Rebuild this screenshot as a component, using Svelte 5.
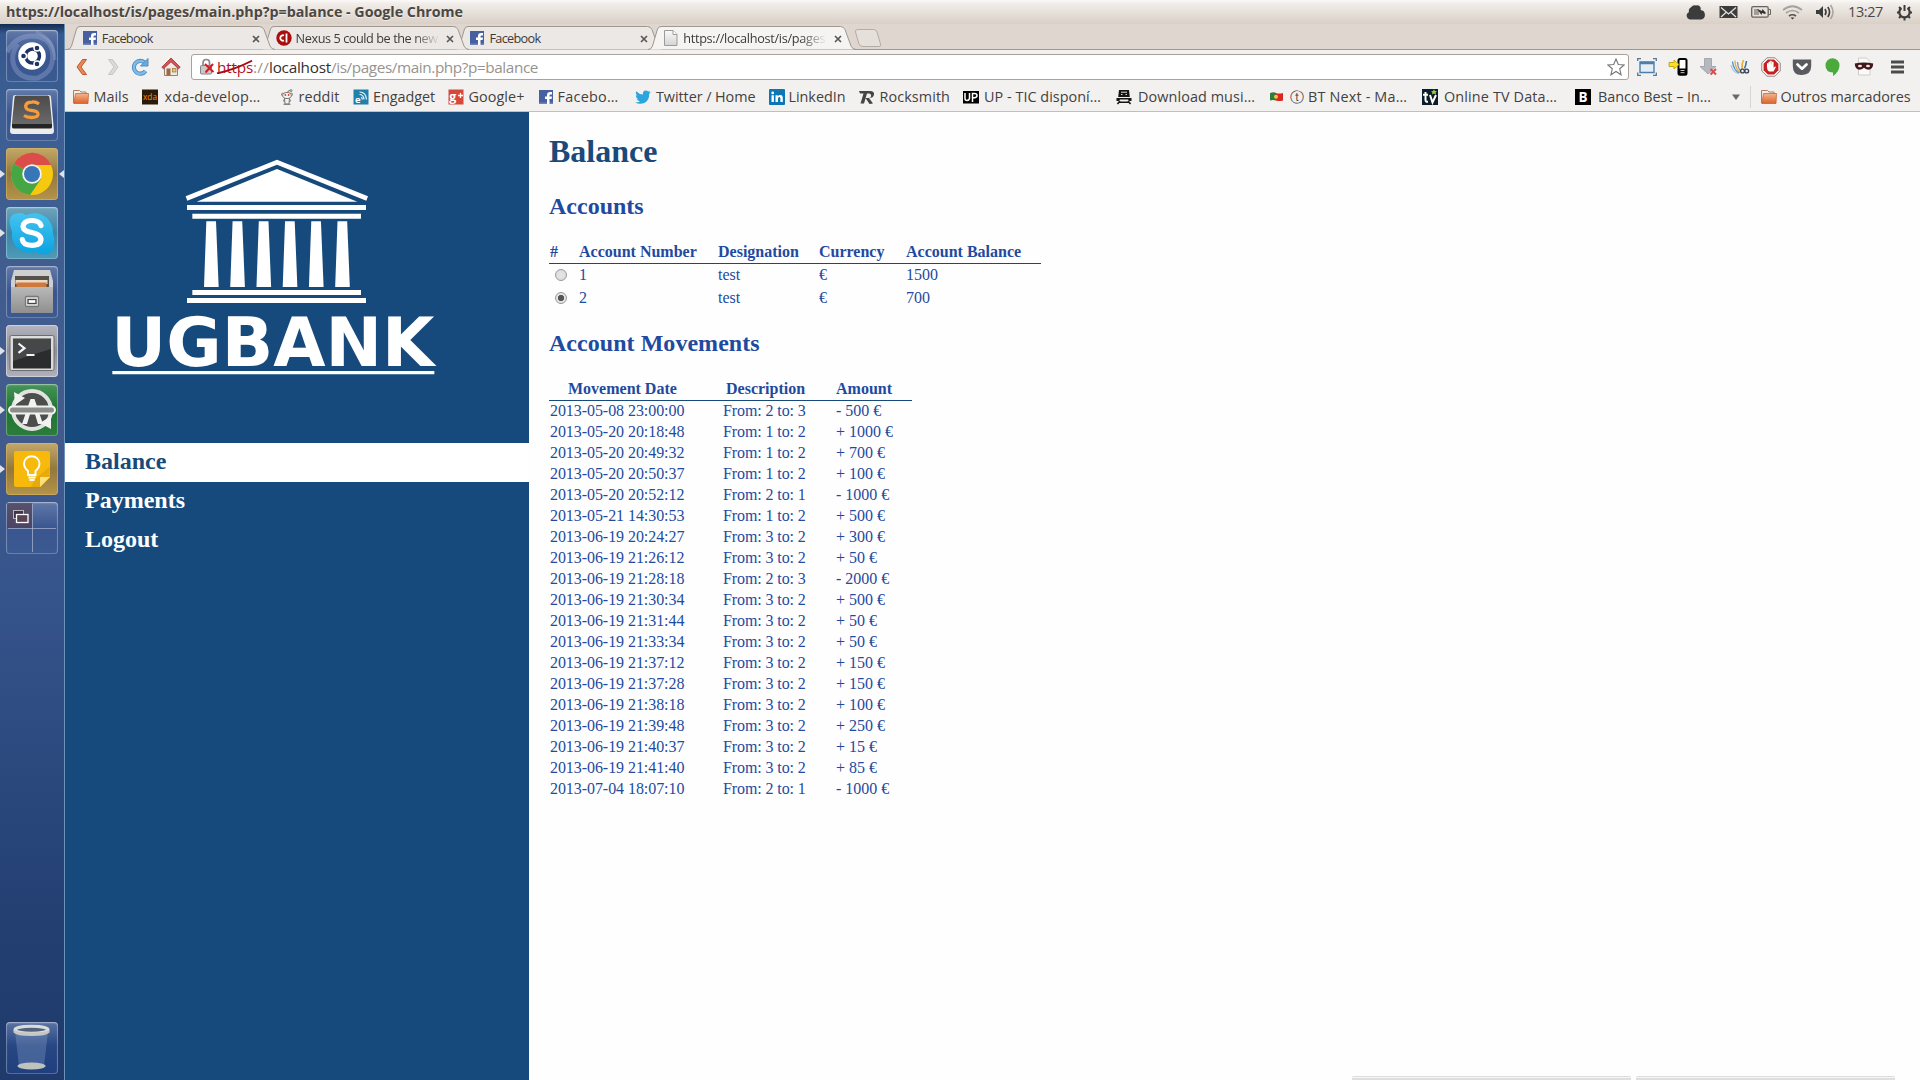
<script>
  // Spreads or tightens the letters so that a label fills its slot exactly.
  function fit(node, width) {
    const natural = node.getBoundingClientRect().width;
    const count = node.textContent.length;
    if (width && count) node.style.letterSpacing = (width - natural) / count + 'px';
  }

  const tray = [
    { icon: 'cloud', gap: 0 },
    { icon: 'mail', gap: 14 },
    { icon: 'battery', gap: 13 },
    { icon: 'wifi', gap: 11 },
    { icon: 'volume', gap: 12 },
  ];

  const tabs = [
    { icon: 'facebook', title: 'Facebook', w: 51 },
    { icon: 'cnet', title: 'Nexus 5 could be the new', w: 142 },
    { icon: 'facebook', title: 'Facebook', w: 51 },
    { icon: 'file', title: 'https://localhost/is/pages', w: 142, active: true },
  ];

  // gap: space before the favicon, pad: space between favicon and label, w: label width
  const bookmarks = [
    { icon: 'folder', label: 'Mails', gap: 0, pad: 4.5, w: 35 },
    { icon: 'xda', label: 'xda-develop…', gap: 13, pad: 7, w: 96 },
    { icon: 'reddit', label: 'reddit', gap: 18, pad: 4, w: 41 },
    { icon: 'engadget', label: 'Engadget', gap: 13, pad: 4.5, w: 62 },
    { icon: 'gplus', label: 'Google+', gap: 13, pad: 4.5, w: 56 },
    { icon: 'facebook', label: 'Facebo…', gap: 13, pad: 4, w: 61 },
    { icon: 'twitter', label: 'Twitter / Home', gap: 16, pad: 5.5, w: 99.5 },
    { icon: 'linkedin', label: 'LinkedIn', gap: 13, pad: 4, w: 57 },
    { icon: 'rocksmith', label: 'Rocksmith', gap: 13, pad: 5, w: 70.5 },
    { icon: 'up', label: 'UP - TIC disponí…', gap: 13, pad: 5, w: 117 },
    { icon: 'train', label: 'Download musi…', gap: 15, pad: 6, w: 117 },
    { icon: 'flag', label: 'ⓣ BT Next - Ma…', gap: 15, pad: 4, w: 117 },
    { icon: 'tv', label: 'Online TV Data…', gap: 14.5, pad: 6.5, w: 113 },
    { icon: 'best', label: 'Banco Best – In…', gap: 17.5, pad: 7.5, w: 113 },
  ];

  const extensions = ['window', 'phone', 'down', 'wings', 'abp', 'pocket', 'pin', 'mask', 'menu'];

  const launcher = [
    { icon: 'dash', tone: 'blue' },
    { icon: 'sublime', tone: 'blue' },
    { icon: 'chrome', tone: 'gold', running: true, focused: true },
    { icon: 'skype', tone: 'teal', running: true },
    { icon: 'files', tone: 'blue' },
    { icon: 'terminal', tone: 'silver', running: true },
    { icon: 'updater', tone: 'green', running: true },
    { icon: 'keep', tone: 'gold', running: true },
    { icon: 'workspaces', tone: 'blue' },
  ];

  const menu = ['Balance', 'Payments', 'Logout'];

  let selected = $state('2');
  const accounts = [
    ['1', 'test', '€', '1500'],
    ['2', 'test', '€', '700'],
  ];

  const movements = [
    ['2013-05-08 23:00:00', 'From: 2 to: 3', '- 500 €'],
    ['2013-05-20 20:18:48', 'From: 1 to: 2', '+ 1000 €'],
    ['2013-05-20 20:49:32', 'From: 1 to: 2', '+ 700 €'],
    ['2013-05-20 20:50:37', 'From: 1 to: 2', '+ 100 €'],
    ['2013-05-20 20:52:12', 'From: 2 to: 1', '- 1000 €'],
    ['2013-05-21 14:30:53', 'From: 1 to: 2', '+ 500 €'],
    ['2013-06-19 20:24:27', 'From: 3 to: 2', '+ 300 €'],
    ['2013-06-19 21:26:12', 'From: 3 to: 2', '+ 50 €'],
    ['2013-06-19 21:28:18', 'From: 2 to: 3', '- 2000 €'],
    ['2013-06-19 21:30:34', 'From: 3 to: 2', '+ 500 €'],
    ['2013-06-19 21:31:44', 'From: 3 to: 2', '+ 50 €'],
    ['2013-06-19 21:33:34', 'From: 3 to: 2', '+ 50 €'],
    ['2013-06-19 21:37:12', 'From: 3 to: 2', '+ 150 €'],
    ['2013-06-19 21:37:28', 'From: 3 to: 2', '+ 150 €'],
    ['2013-06-19 21:38:18', 'From: 3 to: 2', '+ 100 €'],
    ['2013-06-19 21:39:48', 'From: 3 to: 2', '+ 250 €'],
    ['2013-06-19 21:40:37', 'From: 3 to: 2', '+ 15 €'],
    ['2013-06-19 21:41:40', 'From: 3 to: 2', '+ 85 €'],
    ['2013-07-04 18:07:10', 'From: 2 to: 1', '- 1000 €'],
  ];
</script>

{#snippet trayIcon(name)}
  {#if name === 'cloud'}
    <svg width="19" height="16" viewBox="0 0 19 16"><path d="M4 15.500a4 4 0 0 1-1-7.600A4 4 0 0 1 5 3.200A5 5 0 0 1 10 1.500a3.500 3.500 0 0 1 4.500 4.500A4.800 4.800 0 0 1 15 15.500z" fill="#3c3c3c" /></svg>
  {:else if name === 'mail'}
    <svg width="19" height="16" viewBox="0 0 19 16"><rect x=".5" y="2" width="18" height="12" fill="#3c3c3c" /><path d="M2 3.500l7.500 6.500 7.500-6.500M2 13l5.500-5M17 13l-5.500-5" fill="none" stroke="#e9e4de" stroke-width="1.200" /></svg>
  {:else if name === 'battery'}
    <svg width="20" height="16" viewBox="0 0 20 16"><rect x=".7" y="2.700" width="16.500" height="10.500" rx="1.500" fill="#e6e1db" stroke="#66625d" stroke-width="1.300" /><rect x="3" y="5" width="5" height="6" fill="#a19d98" /><path d="M18 5.500h1.500v5H18" fill="none" stroke="#66625d" /><path d="M6 5l5 2 .500-2L15 9l-1 1-3-1-.500 2z" fill="#333" /></svg>
  {:else if name === 'wifi'}
    <svg width="21" height="16" viewBox="0 0 21 16" fill="none" stroke-width="1.700"><path d="M1 6q9.500-7.500 19 0M4 9q6.500-5 13 0" stroke="#a7a29b" /><path d="M7 12q3.500-2.500 7 0" stroke="#55514d" /><path d="M8.500 13.500h4l-2 2z" fill="#3c3c3c" /></svg>
  {:else if name === 'volume'}
    <svg width="21" height="16" viewBox="0 0 21 16"><path d="M1 6h3l4-4v12l-4-4H1z" fill="#3c3c3c" /><g fill="none" stroke-width="1.600"><path d="M10 5q2 3 0 6M12.800 3q3.500 5 0 10" stroke="#3c3c3c" /><path d="M15.500 1q5 7 0 14" stroke="#aaa59e" /></g></svg>
  {:else}
    <svg width="17" height="17" viewBox="0 0 17 17" fill="none" stroke="#3c3c3c"><path d="M5.500 4a5.200 5.200 0 1 0 6 0" stroke-width="2.200" /><path d="M8.500 1v6" stroke-width="2" /><path d="M1 8.500h2M14 8.500h2M3 14l1.500-1.500M14 14l-1.500-1.500M8.500 14v2.500M3 3l1.500 1.500M14 3l-1.500 1.500" stroke-width="2" /></svg>
  {/if}
{/snippet}

{#snippet favicon(name)}
  <svg class="favicon" width="16" height="16" viewBox="0 0 16 16">
    {#if name === 'facebook'}
      <rect x="1" y="1" width="14" height="14" fill="#4760a0" /><rect x="1" y="13.500" width="14" height="1.500" fill="#6d84b8" /><path d="M9 15V10H7V7.500h2V6q0-3 3-3h2v2.500h-1.500q-1 0-1 1v1H14L13.600 10h-2.100v5z" fill="#fff" />
    {:else if name === 'cnet'}
      <circle cx="8" cy="8" r="7.700" fill="#a90d0d" /><path d="M8 5.500a2.700 2.700 0 1 0 0 5M10.500 3.500v9" fill="none" stroke="#fff" stroke-width="1.800" />
    {:else if name === 'file'}
      <path d="M1.500 .5h8.500l4 4v11H1.500z" fill="url(#paper)" stroke="#9b9b9b" /><path d="M10 .5v4h4" fill="#fff" stroke="#9b9b9b" />
    {:else if name === 'folder'}
      <path d="M.5 14V1.500h6L8 3h5v3" fill="#f5efea" stroke="#b17b5e" /><path d="M2.500 4.500h13l-.5 10H.8z" fill="url(#folderFill)" stroke="#c2592b" stroke-width=".7" />
    {:else if name === 'xda'}
      <rect x="0" y=".5" width="16" height="15" fill="#2b1a06" /><text x="1" y="11.200" font-size="8.500" textLength="14" lengthAdjust="spacingAndGlyphs" fill="#f58a1f">xda</text>
    {:else if name === 'reddit'}
      <g fill="#f4f3f1" stroke="#777" stroke-width="1"><path d="M8.500 4q0-3 3-2.500" fill="none" /><circle cx="12" cy="1.600" r="1" /><path d="M5.500 9h5l-.5 6h-4z" /><circle cx="3.800" cy="5.500" r="1.300" /><circle cx="12.200" cy="5.500" r="1.300" /><ellipse cx="8" cy="6.500" rx="4.300" ry="3" /><path d="M5.500 10q-2 2 0 3M10.500 10q2 2 0 3M4.500 15.300h7" fill="none" /></g><circle cx="6.400" cy="6" r=".9" fill="#e0441c" /><circle cx="9.600" cy="6" r=".9" fill="#e0441c" />
    {:else if name === 'engadget'}
      <rect x=".5" y=".5" width="15" height="15" fill="#1f80ab" /><text x="2" y="14" font-size="9.500" font-weight="700" fill="#fff">e</text><path d="M6.500 5.500q4 0 4.500 5M6.500 3q6.500 0 7 7.500M8.500 8l1 2.500" fill="none" stroke="#e5f4fa" stroke-width="1.200" />
    {:else if name === 'gplus'}
      <rect x=".5" y=".5" width="15" height="15" fill="#d6483a" /><text x="1.300" y="11.500" font-size="12.500" font-weight="700" fill="#fff">g</text><path d="M10 6.500h5M12.500 4v5" stroke="#fff" stroke-width="1.300" />
    {:else if name === 'twitter'}
      <path d="M0 13.500q3 .2 5-1.300-2.500-.3-3.200-2.300h1.500Q.8 9 .8 6.200l1.500.4Q0 4.600 1.300 2.200 4 5.300 8 5.600 7.300 1.800 10.800 1.500q1.400 0 2.400 1l2-.8-1.300 1.900 1.900-.5-1.600 1.800Q14.300 11 9.800 13.700 5 16 0 13.500z" fill="#2ca5df" />
    {:else if name === 'linkedin'}
      <rect x="0" y="0" width="16" height="16" rx="1" fill="#0d77b5" /><path d="M2.500 6.200h2.400V13H2.500zM6.500 6.200h2.300v1Q10 5.800 11.500 6q2.300.2 2.300 3V13h-2.400V9.500q0-1.500-1.200-1.500T9 9.500V13H6.500z" fill="#fff" /><circle cx="3.700" cy="3.900" r="1.400" fill="#fff" />
    {:else if name === 'rocksmith'}
      <path d="M0 2h11q4.500 0 4 3.500T10 9l4 5.500-3.500.5-4-6h3q2.500 0 2.700-2T10.500 4.500H8L5 14.500H1.500L4.500 4.500H1z" fill="#454545" />
    {:else if name === 'up'}
      <rect x="0" y="2" width="16" height="12.500" fill="#000" /><path d="M2 4v5.500q0 2 2 2t2.500-2V4M9.500 13V4.500h2q2.500 0 2.500 2t-2.500 2.200H9.500" fill="none" stroke="#fff" stroke-width="1.500" />
    {:else if name === 'train'}
      <path d="M3 1h10l.8 7H2.200zM.5 9h15v3h-2.500l-1-1.500H4L3 12H.5z" fill="#151515" /><path d="M5 3.200h6M5 5.500h1.500M9.500 5.500H11" stroke="#ddd" /><path d="M1.500 15l2.500-3M14.500 15L12 12M3.500 13.300h9" stroke="#151515" stroke-width="1.600" />
    {:else if name === 'flag'}
      <path d="M0 4q4-1.500 6 0v7.500q-3-1-6 0z" fill="#2f7d3b" /><path d="M6 4q3 1 7 0v7.500q-4 1-7 0z" fill="#d92822" /><circle cx="6" cy="7.700" r="2" fill="#e8c93b" />
    {:else if name === 'tv'}
      <rect x="0" y="0" width="16" height="16" fill="#0b1d2a" /><path d="M3.500 3v8q0 2 2.500 1.800M1 5.800h5M8 6l2.500 7.500L14 6" fill="none" stroke="#fff" stroke-width="2" /><path d="M12 .2l1 1.800 2 .2-1.400 1.300.4 2-2-1-2 1 .4-2L9 2.200l2-.2z" fill="#9ad23c" />
    {:else if name === 'best'}
      <rect x="0" y="0" width="16" height="16" fill="#000" /><text x="3.500" y="13" font-size="13.500" font-weight="700" fill="#fff">B</text>
    {/if}
  </svg>
{/snippet}

{#snippet tool(name)}
  <svg width="20" height="20" viewBox="0 0 20 20">
    {#if name === 'back'}
      <path d="M10.500 2.500h4L9 10l5.500 7.500h-4L5 10z" fill="#ee8650" stroke="#b9582d" />
    {:else if name === 'forward'}
      <path d="M9.500 2.500h-4L11 10l-5.500 7.500h4L15 10z" fill="#dcd9d6" stroke="#c8c4c0" />
    {:else if name === 'reload'}
      <path d="M15.500 14a6.400 6.400 0 1 1-1-8.500" fill="none" stroke="#4c8cc4" stroke-width="4.200" /><path d="M15.500 14a6.400 6.400 0 1 1-1-8.500" fill="none" stroke="#82bae6" stroke-width="2.500" /><path d="M18 1.500V9h-7.500z" fill="#6caadb" stroke="#4c8cc4" />
    {:else if name === 'home'}
      <path d="M3.500 10v8.500h13V10L10 4z" fill="#eee9e2" stroke="#8b857e" /><path d="M10 1L.8 10.200l1.700 1.600L10 4.800l7.500 7 1.700-1.600z" fill="#d55356" stroke="#9e2f33" stroke-width=".8" /><rect x="5.500" y="11.500" width="4" height="7" fill="#a3673d" /><rect x="11.500" y="11.500" width="3.500" height="3.500" fill="#e8c75f" stroke="#7d6c42" stroke-width=".6" />
    {:else if name === 'window'}
      <path d="M3 5h14v10.500H3z" fill="#e5eef5" stroke="#4c80ab" stroke-width="1.400" /><path d="M3 6h14" stroke="#4c80ab" stroke-width="2.500" /><path d="M.7 4V1.700H4M19.300 4V1.700H16M.7 15.500v2.800H4M19.300 15.500v2.800H16" fill="none" stroke="#57779a" stroke-width="1.300" />
    {:else if name === 'phone'}
      <rect x="10.500" y="2" width="8" height="15.800" rx="1.500" fill="#fff" stroke="#000" stroke-width="2" /><path d="M10 11.500h9v6.500h-9z" fill="#000" /><path d="M12.500 13.500h4M12.500 15.700h4" stroke="#fff" stroke-width=".8" /><path d="M1 5.500h5V3l5 4.500-5 4.500V9.500H1z" fill="#ffe11a" stroke="#b39a08" stroke-width=".8" />
    {:else if name === 'down'}
      <path d="M5.500 1.500h7v8H17L9 17 1 9.500h4.500z" fill="#b5b9bf" stroke="#999ca2" stroke-width=".8" /><path d="M11.500 12l5.500 5.500M17 12l-5.500 5.500" stroke="#dd4b4b" stroke-width="2" />
    {:else if name === 'wings'}
      <g fill="none"><g stroke-width="1.300"><path d="M1 8q1 7 8 8.500" stroke="#a7c7df" /><path d="M2.500 4.500q1 9 7 11.500" stroke="#4a90d0" /><path d="M5 3.500q0 8 5 12" stroke="#e0b03b" /><path d="M7.500 5q0 5 3 9" stroke="#7d8fb0" /></g><path d="M13.500 3q-2 4-1.500 9" stroke="#e8ae2f" stroke-width="1.600" /><path d="M16.500 4q-.5 4-2 7.500" stroke="#3477b3" stroke-width="1.600" /><g stroke="#3a4657" stroke-width="1.400"><circle cx="12.500" cy="14" r="1.900" /><circle cx="16.700" cy="14" r="1.900" /></g></g>
    {:else if name === 'abp'}
      <path d="M6 .8h8L19.200 6v8L14 19.200H6L.8 14V6z" fill="#fff" stroke="#8a8584" /><path d="M6.800 2.600h6.400l4.200 4.200v6.400l-4.200 4.200H6.800l-4.200-4.200V6.800z" fill="#c9201f" /><path d="M6 10V6.500q.7-1 1.400 0V8.500l.1-3.500q.8-1 1.500 0v3l.2-4q.8-1 1.500 0l.1 4 .3-3q.8-1 1.500 0v6l1.200-1.500q1.300-.2.900 1l-2.200 4H8q-2-1-2-4.500z" fill="#fff" />
    {:else if name === 'pocket'}
      <path d="M.8 2.500h18.400V9q0 8.500-9.200 9T.8 9z" fill="#595b5e" /><path d="M5.500 7.500l4.500 4.200 4.500-4.200" fill="none" stroke="#fff" stroke-width="2.700" stroke-linecap="round" stroke-linejoin="round" />
    {:else if name === 'pin'}
      <path d="M9.500 1.200a7 7.200 0 0 1 7 7.200q0 6-6.500 10.500V15.500Q2.500 15 2.500 8.400a7 7.200 0 0 1 7-7.200z" fill="#4caa3d" />
    {:else if name === 'mask'}
      <path d="M4.500 1h8l3.500 3.500V18H4.500z" fill="#fafafa" stroke="#d0cecc" /><path d="M.8 6.500q9-2 18.400 0 0 6-5 6.300-2.500-.3-4.200-2-1.700 1.700-4.200 2-5-.3-5-6.300z" fill="#42191b" /><ellipse cx="6" cy="9" rx="2" ry="1.200" fill="#f3e5e5" /><ellipse cx="14" cy="9" rx="2" ry="1.200" fill="#f3e5e5" />
    {:else if name === 'menu'}
      <path d="M6 5h13M6 10h13M6 15h13" stroke="#4b4b4b" stroke-width="2.800" />
    {/if}
  </svg>
{/snippet}

{#snippet appIcon(name)}
  <svg width="52" height="52" viewBox="0 0 52 52">
    {#if name === 'dash'}
      <path d="M1 22Q12 2 34 7q16 5 12 26-2 10-14 15Q14 50 8 36 4 24 12 14" fill="none" stroke="#b3bfe4" stroke-opacity=".3" stroke-width="5" /><path d="M30 2q18 6 19 28" fill="none" stroke="#b3bfe4" stroke-opacity=".25" stroke-width="3" /><circle cx="26" cy="26" r="13.800" fill="#fff" /><circle cx="26.500" cy="26" r="7" fill="none" stroke="#1f3466" stroke-width="3.400" /><g stroke="#fff" stroke-width="1.400" fill="#1f3466"><circle cx="17.500" cy="26" r="3" /><circle cx="31" cy="18" r="3" /><circle cx="31" cy="34" r="3" /></g>
    {:else if name === 'sublime'}
      <path d="M7 8q0-2 2.500-2h33Q45 6 45 8l3 34q0 3-3 3H7q-3 0-3-3z" fill="#ececec" /><path d="M8.500 8.500q0-2 2-2h31q2 0 2 2L46 34q0 5-3 5H9q-3 0-3-5z" fill="url(#darkKey)" /><path d="M6 35h40v3q0 1.500-2 1.500H8Q6 39.500 6 38z" fill="#252525" /><path d="M33 15q-3-2.300-7-2-6 .3-6.300 4t5.300 4.300q7.500.7 7 4.200-.6 3-6.500 3-4.500 0-7.500-2" fill="none" stroke="#f79c3d" stroke-width="3.300" />
    {:else if name === 'chrome'}
      <circle cx="26" cy="26" r="21" fill="#f6c90f" /><path d="M26 26L7.800 15.500A21 21 0 0 0 24 46.900L35 31z" fill="#45a644" /><path d="M26 26L7.800 15.500a21 21 0 0 1 37.400 1.500H26z" fill="#dc4d49" /><path d="M26 17h19.200L34 29z" fill="#f6c90f" /><circle cx="26" cy="26" r="9.800" fill="#f2f2ee" /><circle cx="26" cy="26" r="8" fill="#3976b8" />
    {:else if name === 'skype'}
      <path d="M4 18Q2 8 10 6.500q6-1.500 10 1.500Q33 3 42 12q5 6 5 14 2 6 1 12-1 9-9 9.500-5 0-9-2.500Q18 48 10.500 40 5 34 6 25z" fill="url(#skypeFill)" /><path d="M35 18.500q-1.500-5-9.300-5T17 19.500q.3 4.500 8.700 6T35 32q0 6.300-9 6.300t-9.700-5.800" fill="none" stroke="#fff" stroke-width="5.200" stroke-linecap="round" />
    {:else if name === 'files'}
      <path d="M8 4h36l3 11v30q0 2-2 2H7q-2 0-2-2V15z" fill="#cfcfcf" /><path d="M9 10h34v12H9z" fill="#55504a" /><path d="M9.500 14h32v4h-32z" fill="#ead9c5" /><path d="M10.500 16.500h30V21h-30z" fill="#d1793c" /><path d="M5 21h42v24q0 2-2 2H7q-2 0-2-2z" fill="url(#steel)" /><rect x="19.500" y="30.500" width="13" height="10" rx="1" fill="#e3e3e3" stroke="#777" stroke-width="1.300" /><rect x="22" y="33.500" width="8" height="4" fill="#fff" stroke="#444" stroke-width="1.300" />
    {:else if name === 'terminal'}
      <rect x="4" y="10.500" width="44" height="35" rx="1.500" fill="#dcdcda" stroke="#6d6d6d" /><rect x="7" y="13.500" width="38" height="30" fill="#2b2c2d" /><path d="M7 13.500h38V24L7 36z" fill="#fff" fill-opacity=".13" /><path d="M12.500 18.500l6 4.700-6 4.700M20.500 30h8" fill="none" stroke="#f4f4f4" stroke-width="2.200" />
    {:else if name === 'updater'}
      <circle cx="26" cy="26" r="19" fill="#4b4e4b" stroke="#e2e3e1" stroke-width="4" /><path d="M16 40L24.500 15h4L37 40h-5l-5.500-18L21 40z" fill="#f2f2f2" /><path d="M8 8l1 13 10-7zM45 45V32l-11 7z" fill="#f2f2f2" /><rect x="3" y="22.500" width="46" height="7" rx="3.500" fill="#8c8c8a" stroke="#f2f2f2" stroke-width="2" />
    {:else if name === 'keep'}
      <path d="M10 8h32q2 0 2 2v24L34.500 44H10q-2 0-2-2V10q0-2 2-2z" fill="#f7b90c" /><path d="M29 36l-4 8h9.500l9-10V24z" fill="#d99c07" fill-opacity=".5" /><path d="M34 44V34h10z" fill="#fbe07d" /><path d="M22 28q-4-3.500-4-7.500a7.500 7 0 0 1 15.500 0q0 4-4 7.500v4H22z" fill="none" stroke="#fff" stroke-width="1.900" /><path d="M22.500 34.500h7M23.500 37h5" stroke="#fff" stroke-width="1.800" />
    {:else if name === 'workspaces'}
      <path d="M1 1h25v25H1z" fill="#553c4c" fill-opacity=".65" /><path d="M2 26.500h48M26.500 2v48" stroke="#aeb9d0" stroke-opacity=".7" /><rect x="7.500" y="8.500" width="10" height="8" fill="#40334a" stroke="#b9b3b9" /><rect x="10.500" y="12.500" width="11.500" height="8" fill="#5c4354" stroke="#fff" stroke-width="1.300" />
    {:else if name === 'trash'}
      <path d="M9 10l4 34q12 6 25 0l4-34z" fill="#9fb3d8" fill-opacity=".28" /><ellipse cx="25.500" cy="44" rx="14" ry="3.500" fill="#bfc3be" /><ellipse cx="25.500" cy="7.700" rx="16.500" ry="3.500" fill="#53617b" stroke="#dadcd9" stroke-width="3" /><path d="M7.500 8v2.500q3 3.500 18 3.500t18-3.500V8q-4 2.500-18 2.500T7.500 8z" fill="#c4c7c3" />
    {/if}
  </svg>
{/snippet}

<svg class="defs" width="0" height="0">
  <defs>
    <linearGradient id="paper" x1="0" y1="0" x2="0" y2="1"><stop offset="0" stop-color="#fafafa" /><stop offset="1" stop-color="#d4d4d4" /></linearGradient>
    <linearGradient id="folderFill" x1="0" y1="0" x2="0" y2="1"><stop offset="0" stop-color="#f3b58f" /><stop offset="1" stop-color="#dd6227" /></linearGradient>
    <linearGradient id="darkKey" x1="0" y1="0" x2="0" y2="1"><stop offset="0" stop-color="#4a4a4a" /><stop offset="1" stop-color="#6e6e6e" /></linearGradient>
    <linearGradient id="skypeFill" x1="0" y1="0" x2="0" y2="1"><stop offset="0" stop-color="#45c3ee" /><stop offset="1" stop-color="#0aa3e2" /></linearGradient>
    <linearGradient id="steel" x1="0" y1="0" x2="0" y2="1"><stop offset="0" stop-color="#b9b9b9" /><stop offset="1" stop-color="#8f8f8f" /></linearGradient>
  </defs>
</svg>

<div class="desktop">
  <header class="panel">
    <b class="panel-title"><span use:fit={457}>https://localhost/is/pages/main.php?p=balance - Google Chrome</span></b>
    <div class="tray">
      {#each tray as t}
        <span class="tray-item" style:margin-left="{t.gap}px">{@render trayIcon(t.icon)}</span>
      {/each}
      <span class="clock"><span use:fit={35}>13:27</span></span>
      {@render trayIcon('session')}
    </div>
  </header>

  <div class="below">
    <nav class="launcher">
      {#each launcher as app}
        <div class="slot">
          {#if app.running}<i class="arrow left"></i>{/if}
          <div class="tile {app.tone}">{@render appIcon(app.icon)}</div>
          {#if app.focused}<i class="arrow right"></i>{/if}
        </div>
      {/each}
      <div class="slot last"><div class="tile deep">{@render appIcon('trash')}</div></div>
    </nav>

    <div class="browser">
      <div class="tabstrip">
        {#each tabs as tab, i}
          <div class="tab" class:active={tab.active} style:z-index={tab.active ? 9 : 5 - i}>
            <svg class="tab-shape" width="208" height="25" viewBox="0 0 208 25"><path d="M0 24.500Q3.500 24.500 4.500 21L9.500 4Q10.500 1.500 13 1.500H192.500Q195.500 1.500 197 4.500L203 21Q204.500 24.500 208 24.500" /></svg>
            <div class="tab-body">
              {@render favicon(tab.icon)}
              <span class="tab-title" class:long={tab.w > 100}><span use:fit={tab.w}>{tab.title}</span></span>
              <svg class="close" width="8" height="8" viewBox="0 0 8 8"><path d="M1 1l6 6M7 1L1 7" stroke="#5a5754" stroke-width="1.700" /></svg>
            </div>
          </div>
        {/each}
        <svg class="new-tab" width="28" height="18" viewBox="0 0 28 18"><path d="M3.500.5H19.500Q22 .5 23 3L26.500 15Q27.500 17.500 25 17.500H9Q6 17.500 5 15L1.500 3Q1 .5 3.500.5z" fill="#e6e0db" stroke="#b5aca5" /></svg>
      </div>

      <div class="toolbar">
        <span class="nav-btn b1">{@render tool('back')}</span>
        <span class="nav-btn b2">{@render tool('forward')}</span>
        <span class="nav-btn b3">{@render tool('reload')}</span>
        <span class="nav-btn b4">{@render tool('home')}</span>
        <div class="omnibox">
          <svg class="lock" width="16" height="18" viewBox="0 0 16 18"><path d="M4 8V5q0-3.500 3.300-3.500T10.500 5v3" fill="none" stroke="#888" stroke-width="1.700" /><rect x="1.500" y="7.500" width="11" height="8.500" rx="1" fill="#c9c9c9" stroke="#858585" /><path d="M6 6l8.500 8M14 6l-7.500 8.500" stroke="#cf1f26" stroke-width="2" /></svg>
          <span class="scheme"><span use:fit={36}>https</span><svg class="slash" width="38" height="14" viewBox="0 0 38 14"><path d="M1 13.500Q20 9 36 .7" fill="none" stroke="#a80b12" stroke-width="1.800" /></svg></span>
          <span class="dim"><span use:fit={16}>://</span></span>
          <span class="host"><span use:fit={62}>localhost</span></span>
          <span class="dim"><span use:fit={207}>/is/pages/main.php?p=balance</span></span>
          <svg class="star" width="18" height="18" viewBox="0 0 18 18"><path d="M9 1l2.300 5.500 5.900.4-4.500 3.900 1.400 5.900L9 13.500l-5.100 3.200 1.400-5.900L.8 6.900l5.900-.4z" fill="#fff" stroke="#777" stroke-width="1.100" /></svg>
        </div>
        <div class="extensions">
          {#each extensions as e}{@render tool(e)}{/each}
        </div>
      </div>

      <div class="bookmarks">
        {#each bookmarks as b}
          <div class="bookmark" style:margin-left="{b.gap}px" style:width="{16 + b.pad + b.w}px" style:column-gap="{b.pad}px">
            {@render favicon(b.icon)}<span class="bm-label"><span use:fit={b.w}>{b.label}</span></span>
          </div>
        {/each}
        <svg class="more" width="8" height="6" viewBox="0 0 8 6"><path d="M0 .5h8L4 6z" fill="#6c6965" /></svg>
        <div class="other">
          {@render favicon('folder')}<span class="bm-label"><span use:fit={130}>Outros marcadores</span></span>
        </div>
      </div>

      <main class="page">
        <aside class="side">
          <svg class="logo" width="380" height="250" viewBox="0 0 1140 750">
            <g fill="#fff">
              <path d="M287 169L561 59l273 110-5 13L561 74 292 182z" />
              <path d="M320 185L561 87l241 98z" />
              <path d="M291 195h537v15H291zM307 221h506v15H307zM307 450h506v15H307zM291 474h537v15H291zM67 693h966v10H67z" />
              {#each [0, 1, 2, 3, 4, 5] as n}
                <path transform="translate({n * 78.700} 0)" d="M349 244h29l8 197h-44z" />
              {/each}
              <text x="64" y="677" font-size="202" font-weight="700" textLength="969" lengthAdjust="spacingAndGlyphs">UGBANK</text>
            </g>
          </svg>
          {#each menu as m, i}
            <div class="menu-item" class:current={i === 0}>{m}</div>
          {/each}
        </aside>

        <section class="content">
          <h1>Balance</h1>
          <h2 class="first">Accounts</h2>
          <div class="table accounts">
            <div class="row head"><span>#</span><span>Account Number</span><span>Designation</span><span>Currency</span><span>Account Balance</span></div>
            {#each accounts as a}
              <div class="row">
                <span class="pick"><i class="radio" class:on={selected === a[0]}></i></span>
                {#each a as cell}<span>{cell}</span>{/each}
              </div>
            {/each}
          </div>
          <h2 class="second">Account Movements</h2>
          <div class="table movements">
            <div class="row head"><span class="c1">Movement Date</span><span class="c2">Description</span><span>Amount</span></div>
            {#each movements as [date, description, amount]}
              <div class="row"><span class="date">{date}</span><span class="description">{description}</span><span>{amount}</span></div>
            {/each}
          </div>
        </section>
        <div class="docked"><i class="chat wide"></i><i class="chat"></i></div>
      </main>
    </div>
  </div>
</div>

<style>
  :global(body) { margin: 0; overflow: hidden; }
  .defs { position: absolute; }
  .desktop { width: 1920px; height: 1080px; display: flex; flex-direction: column; overflow: hidden; background: #fff; font-family: "Open Sans", "Noto Sans", sans-serif; }
  .desktop svg { display: block; flex: none; }
  .desktop span { white-space: pre; }
  .desktop span > span { display: inline-block; }

  .panel { height: 24px; flex: none; display: flex; align-items: center; justify-content: space-between; padding: 0 7px 0 6px; background: linear-gradient(#fbfaf9, #f1ede9 15%, #d9d0c6); box-sizing: border-box; color: #4b4844; }
  .panel-title { font-size: 14.3px; line-height: 24px; text-shadow: 0 1px 0 #fff8; }
  .tray { display: flex; align-items: center; font-size: 14.500px; }
  .clock { margin: 0 13px 0 12px; width: 35px; line-height: 24px; }

  .below { flex: 1; display: flex; min-height: 0; }
  .launcher { width: 64px; border-right: 1px solid #6f92b8; display: flex; flex-direction: column; gap: 7px; padding: 6px 0; box-sizing: content-box; background: linear-gradient(#132c50, #34588f 10px, #3d5f93 90px, #435b8c 400px, #36558c 560px, #233f72 900px, #1f3a6b); }
  .slot { position: relative; display: flex; padding-left: 6px; }
  .last { margin-top: auto; }
  .tile { width: 52px; height: 52px; border-radius: 4px; overflow: hidden; box-shadow: inset 0 0 0 1px #ffffff38, inset 0 1px 2px #ffffff60; }
  .blue { background: linear-gradient(#6179a8, #3a5590 50%, #3b5a90); }
  .deep { background: linear-gradient(#5b73a2, #274784 45%, #203f7d); }
  .gold { background: linear-gradient(#c3a868, #93783d 50%, #b5944a); box-shadow: inset 0 0 0 1px #e2bc6a80; }
  .teal { background: linear-gradient(#6fa4bb, #3b86a8 50%, #4e9ab8); }
  .silver { background: linear-gradient(#b3b4bd, #8d8f9a 50%, #b0b1bb); box-shadow: inset 0 0 0 1px #e0e0e6a0; }
  .green { background: linear-gradient(#46945a, #1f7430 50%, #2c7d3c); }
  .arrow { position: absolute; top: 22px; width: 0; height: 0; border: 4px solid transparent; }
  .left { left: 0; border-left: 5px solid #dfe2e8; border-right: 0; }
  .right { right: 0; border-right: 5px solid #dfe2e8; border-left: 0; }

  .browser { flex: 1; display: flex; flex-direction: column; min-width: 0; background: #f3f1f0; }
  .tabstrip { height: 26px; flex: none; display: flex; align-items: flex-end; padding-left: 2px; background: linear-gradient(#ded6cf, #ded6cf 25px, #a0978f 25px); }
  .tab { position: relative; width: 208px; height: 25px; margin-right: -14.200px; flex: none; }
  .tab-shape { position: absolute; left: 0; top: 0; fill: #ece8e5; stroke: #a0978f; }
  .active .tab-shape { fill: #f6f4f3; }
  .tab-body { position: relative; display: flex; align-items: center; height: 25px; padding-left: 14.800px; font-size: 12.700px; color: #3d3b39; }
  .tab-title { width: 144px; margin-left: 4px; margin-right: 8px; overflow: hidden; }
  .tab-title.long { -webkit-mask-image: linear-gradient(90deg, #000 82%, #0000 100%); mask-image: linear-gradient(90deg, #000 82%, #0000 100%); }
  .close { margin-top: 2px; margin-left: -1.500px; }
  .new-tab { margin-left: 12px; align-self: center; margin-top: 2px; }

  .toolbar { height: 35px; flex: none; display: flex; align-items: center; padding-bottom: 1px; box-sizing: border-box; }
  .nav-btn { display: flex; }
  .b1 { margin-left: 7px; }
  .b2 { margin-left: 11px; }
  .b3 { margin-left: 7px; }
  .b4 { margin-left: 11px; }
  .omnibox { width: 1438px; height: 26px; box-sizing: border-box; margin-left: 10px; border: 1px solid #aaa19a; border-radius: 3px; background: #fff; display: flex; align-items: center; padding-left: 7px; font-size: 15.300px; line-height: 24px; }
  .scheme { position: relative; width: 36px; margin-left: 2px; color: #b3141b; }
  .slash { position: absolute; left: -1px; top: 5px; }
  .dim { color: #96938f; }
  .host { color: #33302e; }
  .star { margin-left: auto; margin-right: 3px; }
  .extensions { display: flex; gap: 11px; margin-left: 7.500px; }

  .bookmarks { height: 27px; flex: none; display: flex; align-items: center; padding-left: 8px; padding-bottom: 3px; border-bottom: 1px solid #c3beb9; box-sizing: border-box; font-size: 14.400px; color: #43413e; }
  .bookmark, .other { display: flex; align-items: center; flex: none; }
  .bm-label { flex: none; line-height: 22px; }
  .more { margin-left: 20.500px; }
  .other { column-gap: 4px; margin-left: 10px; padding-left: 10px; border-left: 1px solid #d9d5d1; }

  .page { flex: 1; display: flex; background: #fefefe; font-family: "Liberation Serif", serif; position: relative; min-height: 0; }
  .side { width: 464px; background: #174a7c; }
  .logo { margin: 28px 0 53px 25px; font-family: "DejaVu Sans", sans-serif; }
  .menu-item { height: 39px; line-height: 37px; padding-left: 20px; font-size: 24px; font-weight: 700; color: #fff; }
  .current { background: #fff; color: #174a7c; }
  .content { padding-left: 20px; color: #1f4aa0; }
  h1, h2 { margin: 0; font-weight: 700; }
  h1 { font-size: 32px; line-height: 36px; margin-top: 21px; color: #1a4a7a; }
  h2 { font-size: 24px; line-height: 28px; }
  .first { margin-top: 23px; }
  .second { margin-top: 19px; letter-spacing: .04px; }
  .table { font-size: 16px; }
  .row { display: grid; }
  .head { font-weight: 700; border-bottom: 1px solid #174a7c; }
  .accounts { width: 492px; margin-top: 21px; }
  .accounts .row { grid-template-columns: 29px 139px 101px 87px 1fr; padding-left: 1px; height: 23px; line-height: 21px; }
  .accounts .head { height: 22px; }
  .pick { display: flex; align-items: center; height: 21px; padding-left: 5px; }
  .radio { width: 10px; height: 10px; border: 1px solid #999; border-radius: 50%; background: radial-gradient(#e6e6e6, #dadada); }
  .radio.on { background: radial-gradient(circle, #555 0 2.800px, #e4e4e4 3.500px); }
  .movements { width: 363px; margin-top: 21px; }
  .movements .row { grid-template-columns: 173px 113px 1fr; padding-left: 1px; height: 21px; line-height: 19px; }
  .movements .head { height: 22px; line-height: 21px; }
  .date { letter-spacing: -.065px; }
  .description { letter-spacing: -.1px; }
  .c1 { padding-left: 18px; }
  .c2 { padding-left: 3px; }
  .docked { position: absolute; right: 25px; bottom: 0; display: flex; gap: 5px; }
  .chat { width: 259px; height: 4px; box-sizing: border-box; border-top: 1px solid #dcdcdc; border-bottom: 2px solid #dedede; background: #f6f6f6; border-radius: 2px 2px 0 0; }
  .chat.wide { width: 279px; }
</style>
